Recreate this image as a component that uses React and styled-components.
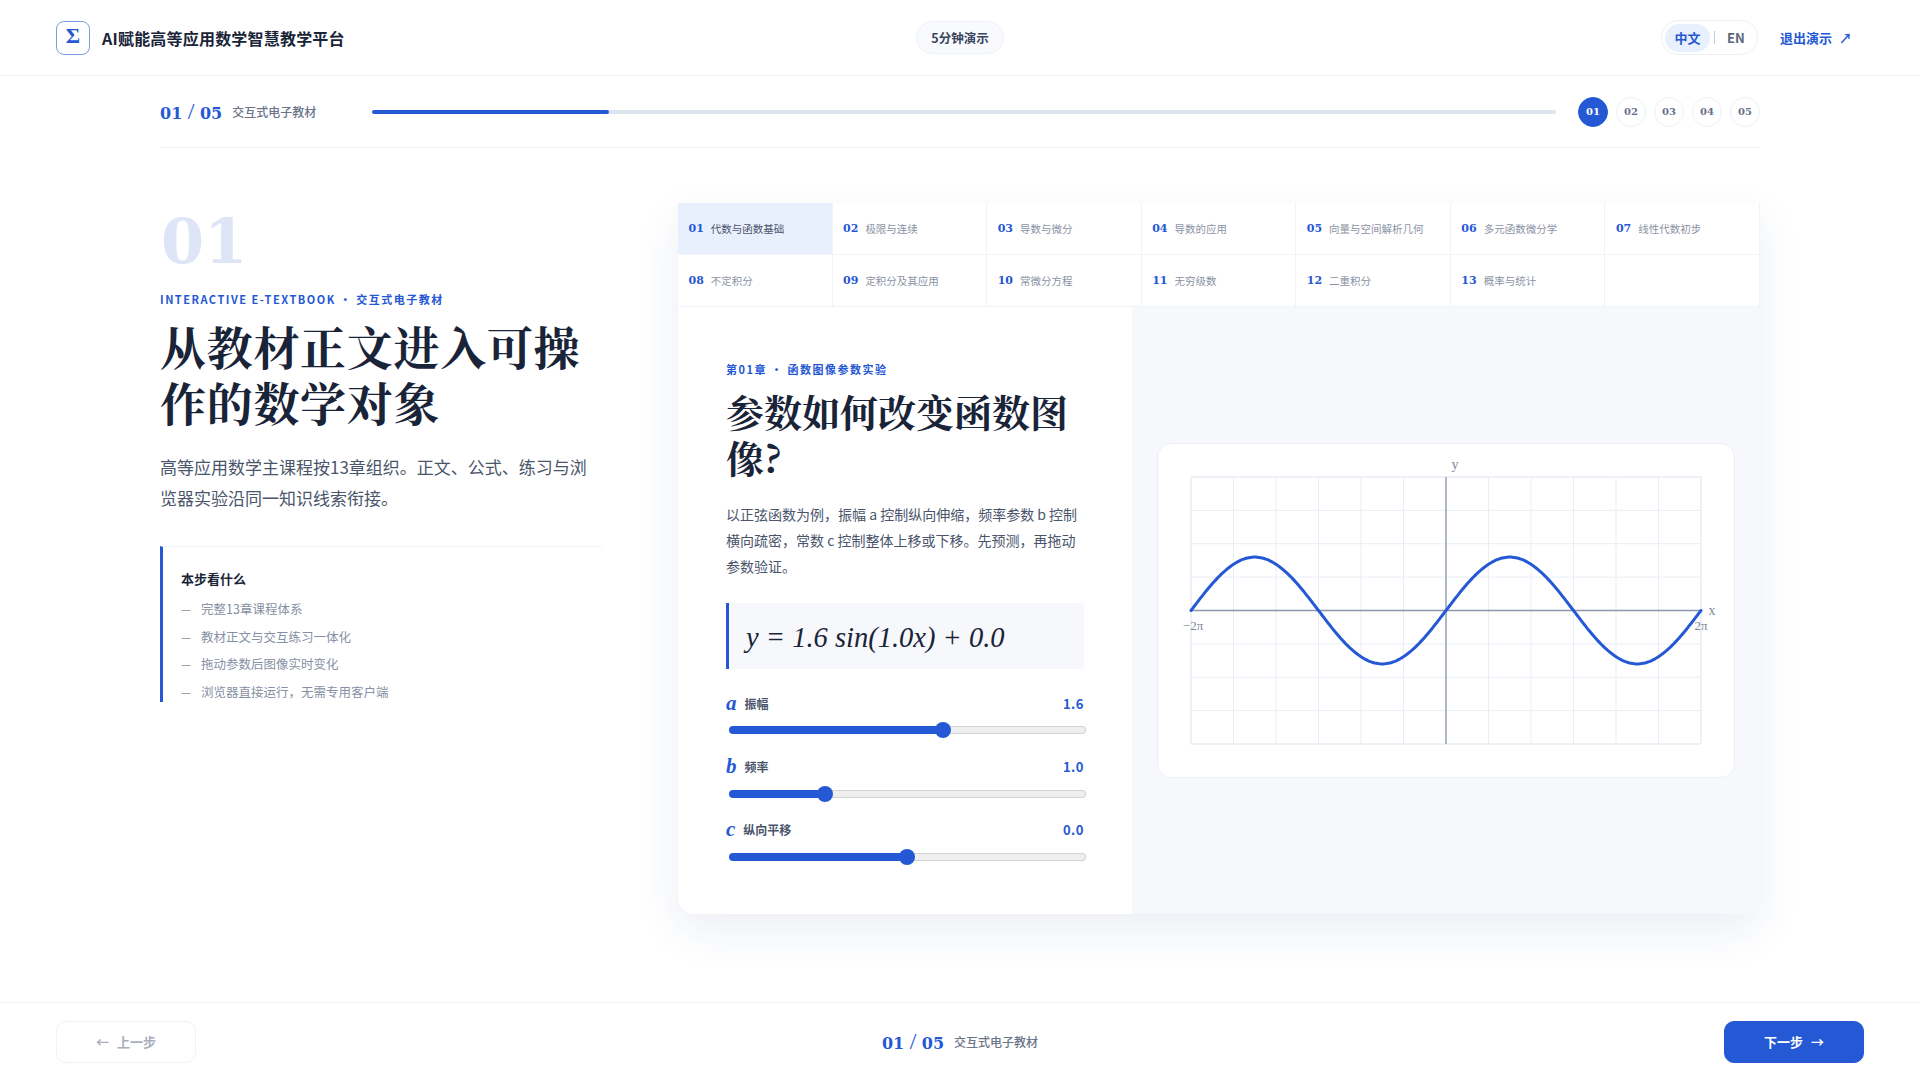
import { useState } from "react";
import styled, { createGlobalStyle } from "styled-components";

const BLUE = "#2558d4";
const INK = "#1a2438";
const SANS = `"Noto Sans CJK SC", "Noto Sans", sans-serif`;
const SERIF = `"Liberation Serif", "Noto Serif CJK SC", serif`;
const NUMERALS = `"DejaVu Serif", "Liberation Serif", serif`;
const CJK_SERIF = `"Noto Serif CJK SC", "Liberation Serif", serif`;

const chapters = [
  "代数与函数基础", "极限与连续", "导数与微分", "导数的应用", "向量与空间解析几何", "多元函数微分学", "线性代数初步",
  "不定积分", "定积分及其应用", "常微分方程", "无穷级数", "二重积分", "概率与统计", "",
];

const checklist = ["完整13章课程体系", "教材正文与交互练习一体化", "拖动参数后图像实时变化", "浏览器直接运行，无需专用客户端"];

const params = [
  { key: "a", name: "振幅", min: 0.2, max: 2.5 },
  { key: "b", name: "频率", min: 0.3, max: 3 },
  { key: "c", name: "纵向平移", min: -2, max: 2 },
];

const GlobalStyle = createGlobalStyle`
  html, body { margin: 0; background: #fff; }
  * { box-sizing: border-box; }
  body { font-family: ${SANS}; color: ${INK}; }
`;

const Page = styled.div`
  height: 1080px;
  display: flex;
  flex-direction: column;
  overflow: hidden;
`;

const Header = styled.header`
  height: 76px;
  flex: none;
  display: grid;
  grid-template-columns: 1fr auto 1fr;
  align-items: center;
  padding: 0 56px;
  border-bottom: 1px solid #eff2f7;
`;

const Brand = styled.div`
  display: flex;
  align-items: center;
  gap: 12px;
  font-size: 16px;
  font-weight: 700;
  letter-spacing: 0.2px;
`;

const Logo = styled.div`
  width: 34px;
  height: 34px;
  display: flex;
  align-items: center;
  justify-content: center;
  border: 1px solid #7f9be3;
  border-radius: 8px;
  color: ${BLUE};
  font-family: ${SERIF};
  font-size: 22px;
  font-weight: 700;
  padding-bottom: 3px;
`;

const Duration = styled.div`
  height: 33px;
  padding: 0 14px;
  display: flex;
  align-items: center;
  border: 1px solid #edf0f6;
  border-radius: 17px;
  background: #f8fafd;
  font-size: 12.5px;
  font-weight: 700;
  color: #3a4560;
`;

const HeaderRight = styled.div`
  display: flex;
  justify-content: flex-end;
  align-items: center;
  gap: 22px;
`;

const LangSwitch = styled.div`
  width: 97px;
  height: 35px;
  padding: 0 3px;
  display: flex;
  align-items: center;
  border: 1px solid #edf0f6;
  border-radius: 18px;
  font-size: 13px;
  font-weight: 700;
`;

const Lang = styled.span`
  height: 28px;
  padding: ${(p) => (p.$active ? "0 9.5px" : "0 0 0 12px")};
  display: flex;
  align-items: center;
  border-radius: 14px;
  background: ${(p) => (p.$active ? "#e9f0fd" : "transparent")};
  color: ${(p) => (p.$active ? BLUE : "#5c667d")};
`;

const LangBar = styled.span`
  width: 1px;
  height: 13px;
  background: #c4cad6;
  margin-left: 4px;
`;

const ExitLink = styled.a`
  color: ${BLUE};
  font-size: 13px;
  font-weight: 700;
  margin-right: 12px;
  word-spacing: 4px;
`;

const ProgressRow = styled.div`
  height: 72px;
  flex: none;
  margin: 0 160px;
  display: flex;
  align-items: center;
  border-bottom: 1px solid #eff2f7;
`;

const StepCount = styled.div`
  display: flex;
  align-items: center;
  gap: 10px;
  font-size: 12px;
  font-weight: 500;
  color: #6b7488;
  white-space: nowrap;
`;

const StepFraction = styled.span`
  display: inline-flex;
  align-items: baseline;
  font-family: ${NUMERALS};
  font-size: 16px;
  font-weight: 700;
  color: ${BLUE};
`;

const StepSlash = styled.span`
  margin: 0 5.5px;
  font-family: ${SERIF};
  font-size: 24px;
  font-weight: 400;
`;

const Track = styled.div`
  width: 1184px;
  height: 4px;
  margin-left: auto;
  border-radius: 2px;
  background: #dde3ef;
`;

const TrackFill = styled.div`
  width: 20%;
  height: 100%;
  border-radius: 2px;
  background: ${BLUE};
`;

const Dots = styled.div`
  display: flex;
  gap: 8px;
  margin-left: 22px;
`;

const Dot = styled.div`
  width: 30px;
  height: 30px;
  display: flex;
  align-items: center;
  justify-content: center;
  border-radius: 50%;
  border: 1px solid ${(p) => (p.$active ? BLUE : "#edf0f5")};
  background: ${(p) => (p.$active ? BLUE : "#fff")};
  color: ${(p) => (p.$active ? "#fff" : "#667087")};
  font-family: ${NUMERALS};
  font-size: 10px;
  font-weight: 700;
`;

const Main = styled.main`
  flex: 1;
  padding: 55px 160px 0;
  display: grid;
  grid-template-columns: 442px 1082px;
  justify-content: space-between;
  align-items: start;
`;

const Intro = styled.section`
  display: flex;
  flex-direction: column;
`;

const BigNumber = styled.div`
  font-family: ${NUMERALS};
  font-size: 62px;
  font-weight: 700;
  line-height: 78px;
  height: 87px;
  padding-left: 1px;
  color: #dde5f6;
`;

const Eyebrow = styled.div`
  font-size: 11px;
  line-height: 18px;
  font-weight: 700;
  color: ${BLUE};
  letter-spacing: 1.5px;
  white-space: nowrap;
`;

const Heading = styled.h1`
  margin: 9px 0 0;
  font-family: ${CJK_SERIF};
  font-size: 46px;
  line-height: 56px;
  font-weight: 700;
  letter-spacing: 0.7px;
`;

const Lead = styled.p`
  margin: 22px 0 0;
  font-size: 17px;
  line-height: 31px;
  color: #4a556b;
`;

const Checklist = styled.div`
  margin-top: 33px;
  height: 156px;
  padding: 22px 0 0 18px;
  border-left: 3px solid ${BLUE};
  border-top: 1px solid #f0f2f6;
`;

const ChecklistTitle = styled.div`
  font-size: 13px;
  line-height: 20px;
  font-weight: 700;
`;

const ChecklistItems = styled.ul`
  list-style: none;
  margin: 10px 0 0;
  padding: 0;
  display: flex;
  flex-direction: column;
  gap: 7.7px;
`;

const ChecklistItem = styled.li`
  display: flex;
  gap: 9px;
  font-size: 12.5px;
  line-height: 20px;
  color: #868fa3;

  &::before {
    content: "—";
    width: 11px;
    font-size: 11px;
    overflow: hidden;
  }
`;

const Panel = styled.section`
  height: 711px;
  display: flex;
  flex-direction: column;
  border-radius: 0 0 16px 16px;
  overflow: hidden;
  background: #fff;
  box-shadow: 0 16px 44px rgba(36, 70, 140, 0.09);
`;

const ChapterGrid = styled.nav`
  flex: none;
  display: grid;
  grid-template-columns: repeat(7, 1fr);
  grid-auto-rows: 52px;
`;

const ChapterCell = styled.div`
  display: flex;
  align-items: center;
  gap: 7px;
  padding: 0 10.5px;
  border-right: 1px solid #eff2f6;
  border-bottom: 1px solid #eff2f6;
  background: ${(p) => (p.$active ? "#e9f0fd" : "#fff")};
  font-size: 10.5px;
  color: ${(p) => (p.$active ? "#4a556b" : "#8b93a5")};
  white-space: nowrap;
`;

const ChapterNumber = styled.span`
  font-family: ${NUMERALS};
  font-size: 11px;
  font-weight: 700;
  color: ${BLUE};
`;

const PanelBody = styled.div`
  flex: 1;
  display: grid;
  grid-template-columns: 454px 1fr;
  min-height: 0;
`;

const Lesson = styled.div`
  padding: 53px 48px 0;
`;

const LessonTitle = styled.h2`
  margin: 10px 0 0;
  font-family: ${CJK_SERIF};
  font-size: 38px;
  line-height: 46px;
  font-weight: 700;
`;

const LessonText = styled.p`
  margin: 21px 0 0;
  font-size: 14px;
  line-height: 26px;
  color: #4a556b;
`;

const Formula = styled.div`
  margin-top: 24px;
  height: 66px;
  padding: 4px 0 0 17px;
  display: flex;
  align-items: center;
  border-left: 3px solid ${BLUE};
  background: #f6f8fc;
  font-family: "Liberation Serif", serif;
  font-style: italic;
  font-size: 28.5px;
`;

const Sliders = styled.div`
  margin-top: 24px;
  display: flex;
  flex-direction: column;
  gap: 18px;
`;

const SliderHead = styled.div`
  height: 20px;
  margin-bottom: 9.3px;
  display: flex;
  align-items: center;
  gap: 8px;
  font-size: 12px;
  font-weight: 700;
  color: #4a556b;
`;

const SliderSymbol = styled.span`
  font-family: ${SERIF};
  font-style: italic;
  font-size: 21px;
  font-weight: 700;
  color: ${BLUE};
`;

const SliderValue = styled.span`
  margin-left: auto;
  font-size: 13px;
  color: ${BLUE};
  letter-spacing: 0.5px;
`;

const SliderInput = styled.input`
  appearance: none;
  display: block;
  width: calc(100% - 1px);
  height: 16px;
  margin: 0 0 0 3px;
  background: transparent;

  &::-webkit-slider-runnable-track {
    height: 8px;
    padding: 1px;
    border-radius: 4px;
    background:
      linear-gradient(${BLUE}, ${BLUE}) 0 0 / var(--fill) 100% no-repeat border-box,
      linear-gradient(#efefef, #efefef) content-box,
      #d2d2d2;
  }

  &::-webkit-slider-thumb {
    appearance: none;
    width: 16px;
    height: 16px;
    margin: -5px -1px 0;
    border-radius: 50%;
    background: ${BLUE};
  }
`;

const ChartPane = styled.div`
  display: flex;
  align-items: center;
  justify-content: center;
  background: #f6f8fc;
`;

const ChartCard = styled.div`
  width: 578px;
  height: 335px;
  border: 1px solid #eceff6;
  border-radius: 14px;
  background: #fff;
`;

const Footer = styled.footer`
  height: 78px;
  flex: none;
  display: grid;
  grid-template-columns: 1fr auto 1fr;
  align-items: center;
  padding: 0 56px;
  border-top: 1px solid #eff2f7;
`;

const NavButton = styled.button`
  width: 140px;
  height: 42px;
  display: flex;
  align-items: center;
  justify-content: center;
  border: 1px solid ${(p) => (p.$primary ? BLUE : "#f0f2f6")};
  border-radius: 10px;
  background: ${(p) => (p.$primary ? BLUE : "#fff")};
  color: ${(p) => (p.$primary ? "#fff" : "#a8aeba")};
  font-family: ${SANS};
  font-size: 13px;
  font-weight: 700;
  word-spacing: 5px;
  justify-self: ${(p) => (p.$primary ? "end" : "start")};
`;

function Wave({ a, b, c }) {
  const left = 33;
  const top = 33;
  const w = 510;
  const h = 267;
  const unit = h / 8;
  const toY = (x) => top + h / 2 - (a * Math.sin(b * x) + c) * unit;
  const points = [];
  for (let i = 0; i <= 300; i++) {
    const x = -2 * Math.PI + (i / 300) * 4 * Math.PI;
    points.push(`${(left + (i / 300) * w).toFixed(1)},${toY(x).toFixed(1)}`);
  }

  return (
    <svg width="576" height="333" viewBox="0 0 576 333" style={{ display: "block" }}>
      {Array.from({ length: 13 }, (_, i) => (
        <line key={i} x1={left + (i * w) / 12} x2={left + (i * w) / 12} y1={top} y2={top + h} stroke="#e9edf5" strokeWidth={i % 12 === 0 ? 1.5 : 1} />
      ))}
      {Array.from({ length: 9 }, (_, i) => (
        <line key={i} y1={top + i * unit} y2={top + i * unit} x1={left} x2={left + w} stroke="#e9edf5" strokeWidth={i % 8 === 0 ? 1.5 : 1} />
      ))}
      <line x1={left + w / 2} x2={left + w / 2} y1={top} y2={top + h} stroke="#9aa2b5" strokeWidth="1.5" />
      <line x1={left} x2={left + w} y1={top + h / 2} y2={top + h / 2} stroke="#8d96a9" strokeWidth="1.5" />
      <polyline points={points.join(" ")} fill="none" stroke={BLUE} strokeWidth="3" strokeLinecap="round" strokeLinejoin="round" />
      <g fontFamily={SERIF} fill="#7f889b" textAnchor="middle">
        <text x={left + w / 2 + 9} y="25" fontSize="14">y</text>
        <text x={left + w + 11} y={top + h / 2 + 4} fontSize="14">x</text>
        <text x={left + 2} y={top + h / 2 + 19} fontSize="13">−2π</text>
        <text x={left + w} y={top + h / 2 + 19} fontSize="13">2π</text>
      </g>
    </svg>
  );
}

function StepLabel() {
  return (
    <StepCount>
      <StepFraction>
        01<StepSlash>/</StepSlash>05
      </StepFraction>
      交互式电子教材
    </StepCount>
  );
}

export default function App() {
  const [values, setValues] = useState({ a: 1.6, b: 1.0, c: 0.0 });
  const { a, b, c } = values;

  return (
    <Page>
      <GlobalStyle />
      <Header>
        <Brand>
          <Logo>Σ</Logo>
          AI赋能高等应用数学智慧教学平台
        </Brand>
        <Duration>5分钟演示</Duration>
        <HeaderRight>
          <LangSwitch>
            <Lang $active>中文</Lang>
            <LangBar />
            <Lang>EN</Lang>
          </LangSwitch>
          <ExitLink>退出演示 ↗</ExitLink>
        </HeaderRight>
      </Header>

      <ProgressRow>
        <StepLabel />
        <Track>
          <TrackFill />
        </Track>
        <Dots>
          {["01", "02", "03", "04", "05"].map((n, i) => (
            <Dot key={n} $active={i === 0}>{n}</Dot>
          ))}
        </Dots>
      </ProgressRow>

      <Main>
        <Intro>
          <BigNumber>01</BigNumber>
          <Eyebrow>INTERACTIVE E-TEXTBOOK · 交互式电子教材</Eyebrow>
          <Heading>从教材正文进入可操作的数学对象</Heading>
          <Lead>高等应用数学主课程按13章组织。正文、公式、练习与浏览器实验沿同一知识线索衔接。</Lead>
          <Checklist>
            <ChecklistTitle>本步看什么</ChecklistTitle>
            <ChecklistItems>
              {checklist.map((item) => (
                <ChecklistItem key={item}>{item}</ChecklistItem>
              ))}
            </ChecklistItems>
          </Checklist>
        </Intro>

        <Panel>
          <ChapterGrid>
            {chapters.map((name, i) => (
              <ChapterCell key={i} $active={i === 0}>
                {name && <ChapterNumber>{String(i + 1).padStart(2, "0")}</ChapterNumber>}
                {name}
              </ChapterCell>
            ))}
          </ChapterGrid>
          <PanelBody>
            <Lesson>
              <Eyebrow>第01章 · 函数图像参数实验</Eyebrow>
              <LessonTitle>参数如何改变函数图像?</LessonTitle>
              <LessonText>以正弦函数为例，振幅 a 控制纵向伸缩，频率参数 b 控制横向疏密，常数 c 控制整体上移或下移。先预测，再拖动参数验证。</LessonText>
              <Formula>
                y = {a.toFixed(1)} sin({b.toFixed(1)}x) + {c.toFixed(1)}
              </Formula>
              <Sliders>
                {params.map((p) => {
                  const share = (values[p.key] - p.min) / (p.max - p.min);
                  return (
                    <div key={p.key}>
                      <SliderHead>
                        <SliderSymbol>{p.key}</SliderSymbol>
                        {p.name}
                        <SliderValue>{values[p.key].toFixed(1)}</SliderValue>
                      </SliderHead>
                      <SliderInput
                        type="range"
                        min={p.min}
                        max={p.max}
                        step="0.1"
                        value={values[p.key]}
                        style={{ "--fill": `calc(8px + (100% - 16px) * ${share})` }}
                        onChange={(e) => setValues({ ...values, [p.key]: Number(e.target.value) })}
                      />
                    </div>
                  );
                })}
              </Sliders>
            </Lesson>
            <ChartPane>
              <ChartCard>
                <Wave a={a} b={b} c={c} />
              </ChartCard>
            </ChartPane>
          </PanelBody>
        </Panel>
      </Main>

      <Footer>
        <NavButton disabled>← 上一步</NavButton>
        <StepLabel />
        <NavButton $primary>下一步 →</NavButton>
      </Footer>
    </Page>
  );
}
